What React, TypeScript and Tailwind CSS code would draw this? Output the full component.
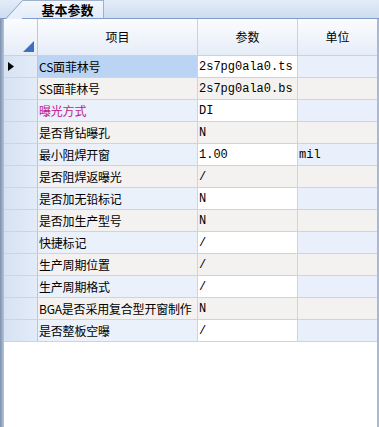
import React from "react"

type Row = { name: string; value: string; unit?: string; pink?: boolean }

const ROWS: Row[] = [
  { name: "CS面菲林号", value: "2s7pg0ala0.ts" },
  { name: "SS面菲林号", value: "2s7pg0ala0.bs" },
  { name: "曝光方式", value: "DI", pink: true },
  { name: "是否背钻曝孔", value: "N" },
  { name: "最小阻焊开窗", value: "1.00", unit: "mil" },
  { name: "是否阻焊返曝光", value: "/" },
  { name: "是否加无铅标记", value: "N" },
  { name: "是否加生产型号", value: "N" },
  { name: "快捷标记", value: "/" },
  { name: "生产周期位置", value: "/" },
  { name: "生产周期格式", value: "/" },
  { name: "BGA是否采用复合型开窗制作", value: "N" },
  { name: "是否整板空曝", value: "/" },
]

const cjk = "font-['Noto_Sans_CJK_SC','Liberation_Sans',sans-serif]"
const mono = "font-['Liberation_Mono','Noto_Sans_CJK_SC',monospace]"

function Tab() {
  return (
    <div className="flex h-[19px] bg-gradient-to-b from-[#e3ecf8] to-[#cddcf1] border-b border-[#7f9ccb]">
      <div className="w-[6px]" />
      <svg width="16" height="19" viewBox="0 0 16 19" className="shrink-0">
        <polygon points="0,19 16,1 16,19" fill="#e9f0fa" />
        <line x1="0" y1="18.5" x2="16" y2="1" stroke="#8da2c2" strokeWidth="1" />
      </svg>
      <div
        className={`flex w-[82px] items-center justify-center border-t border-r border-[#9fb1cc] bg-gradient-to-b from-[#f3f7fc] to-[#e2ebf7] pl-[10px] text-[13px] font-bold leading-none text-black ${cjk}`}
      >
        基本参数
      </div>
    </div>
  )
}

function Header() {
  return (
    <div className="flex h-[37px] border-b border-[#c3d3ea] bg-gradient-to-b from-[#fbfcfe] to-[#e6edf8]">
      <div className="relative w-[34px] border-r border-[#b9c9e0]">
        <svg width="11" height="11" viewBox="0 0 11 11" className="absolute bottom-[3px] right-[3px]">
          <polygon points="11,0 11,11 0,11" fill="#3d6fc4" />
        </svg>
      </div>
      <div className={`flex w-[160px] items-center justify-center border-r border-[#c3d3ea] text-[12px] text-black ${cjk}`}>项目</div>
      <div className={`flex w-[100px] items-center justify-center border-r border-[#c3d3ea] text-[12px] text-black ${cjk}`}>参数</div>
      <div className={`flex w-[79px] items-center justify-center text-[12px] text-black ${cjk}`}>单位</div>
    </div>
  )
}

function DataRow({ row, index }: { row: Row; index: number }) {
  const odd = index % 2 === 1
  const nameBg = index === 0 ? "bg-[#bcd4f4]" : odd ? "bg-[#f3f2f0]" : "bg-[#eaf1fb]"
  const valueBg = odd ? "bg-[#f3f2f0]" : "bg-white"
  const unitBg = odd ? "bg-[#f3f2f0]" : "bg-[#e9f0fb]"
  return (
    <div className="flex h-[22px] border-b border-[#c6d5eb]">
      <div className="flex w-[34px] items-center border-r border-[#b5c6df] bg-gradient-to-r from-[#d6e2f3] to-[#e3ecf8] pl-[4px]">
        {index === 0 && (
          <svg width="6" height="9" viewBox="0 0 6 9">
            <polygon points="0,0 6,4.5 0,9" fill="#000" />
          </svg>
        )}
      </div>
      <div
        className={`flex w-[160px] items-center overflow-hidden whitespace-nowrap border-r border-[#c6d5eb] pl-[1px] text-[12px] tracking-[-0.2px] ${nameBg} ${cjk} ${row.pink ? "text-[#c0168e]" : "text-black"}`}
      >
        {row.name}
      </div>
      <div className={`flex w-[100px] items-center border-r border-[#c6d5eb] pl-[1px] text-[12px] text-black ${valueBg} ${mono}`}>
        {row.value}
      </div>
      <div className={`flex w-[79px] items-center pl-[1px] text-[12px] text-black ${unitBg} ${mono}`}>
        {row.unit ?? ""}
      </div>
    </div>
  )
}

export default function App() {
  return (
    <div className="flex h-[427px] w-[379px] flex-col overflow-hidden bg-white">
      <Tab />
      <div className="flex flex-1">
        <div className="w-[4px] bg-gradient-to-r from-[#7d90ad] to-[#b5c5dc]" />
        <div className="flex flex-1 flex-col border-r-2 border-[#aab9d0] bg-white">
          <Header />
          {ROWS.map((row, i) => (
            <DataRow key={row.name} row={row} index={i} />
          ))}
        </div>
      </div>
    </div>
  )
}
